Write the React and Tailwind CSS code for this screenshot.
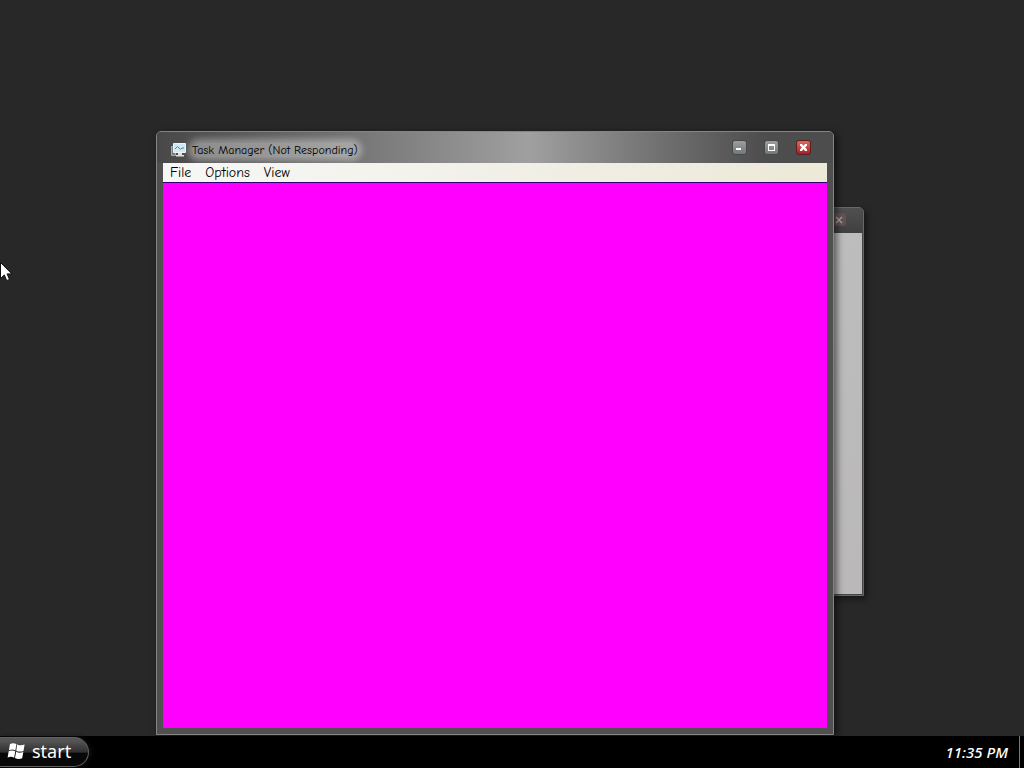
import React from 'react';

const WindowButton = ({ label, close = false, children }) => (
  <button
    type="button"
    aria-label={label}
    className={`flex h-[15px] w-[15px] items-center justify-center rounded-[3px] border ${
      close
        ? 'border-[#601c20] bg-linear-to-b from-[#d86c62] to-[#a81c24]'
        : 'border-[#454949] bg-linear-to-b from-[#9a9e9e] to-[#737878]'
    }`}
  >
    <svg viewBox="0 0 13 13" className="h-[13px] w-[13px] shrink-0" fill="none" aria-hidden="true">
      {children}
    </svg>
  </button>
);

const CloseGlyph = () => (
  <path
    d="M3 3h2l1.500 2L8 3h2v1.500L8.200 6.500 10 8.500V10H8L6.500 8 5 10H3V8.500l1.800-2L3 4.500z"
    fill="#fff"
  />
);

const MonitorIcon = () => (
  <svg viewBox="0 0 16 16" className="h-4 w-4 shrink-0" fill="none" aria-hidden="true">
    <path d="M.5 4.500h4v9h-4z" fill="#777d7d" stroke="#a9afaf" />
    <path d="M2.500 1.500h12v9h-12z" fill="#cfeaf2" stroke="#f1f3f1" />
    <path d="M4 7 6.500 4.500l3 3L11 6h2" stroke="#3a8aa8" />
    <path d="M7 11h4v2h2v1.500H5V13h2z" fill="#dfe2df" />
  </svg>
);

const BackgroundWindow = () => (
  <section
    aria-label="Background window"
    className="absolute top-[207px] left-[400px] flex h-[389px] w-[464px] flex-col rounded-t-[5px] border border-[#686868] bg-[#464646] px-px pb-px shadow-[3px_3px_6px_rgba(0,0,0,0.45)]"
  >
    <header className="flex h-[25px] shrink-0 items-start justify-end bg-linear-to-b from-[#505050] to-[#404040] pt-[5px] pr-4">
      <button
        type="button"
        aria-label="Close background window"
        className="flex h-[13px] w-[14px] items-center justify-center rounded-[3px] border border-[#744b4b] bg-[#625454]"
      >
        <svg viewBox="0 0 10 10" className="h-[10px] w-[10px] shrink-0" aria-hidden="true">
          <path d="m2 2 6 6m0-6-6 6" stroke="#aca2a2" strokeWidth="1.5" />
        </svg>
      </button>
    </header>
    <div className="grow bg-linear-to-b from-[#bdbdbd] to-[#bab8b8]" />
  </section>
);

const TaskManager = () => (
  <section
    aria-label="Task Manager"
    className="absolute top-[131px] left-[156px] flex h-[604px] w-[678px] flex-col rounded-t-[5px] border border-[#858585] bg-[#505050] px-[6px] pb-[6px] shadow-[3px_2px_7px_rgba(0,0,0,0.55)]"
  >
    <header className="-mx-[6px] flex h-[31px] shrink-0 items-center justify-between rounded-t-[4px] bg-linear-to-r from-[#484848] via-[#a0a0a0] via-55% to-[#4d4d4d] to-90% pr-[22px] pl-[14px]">
      <div className="flex items-center gap-[5px] pt-1">
        <MonitorIcon />
        <h1 className="rounded-full bg-white/35 font-['Comic_Sans_MS','Comic_Neue','Lato',cursive] text-[12px] leading-[14px] text-black shadow-[0_0_6px_4px_rgba(255,255,255,0.35)]">
          Task Manager (Not Responding)
        </h1>
      </div>
      <div className="flex gap-[17px]">
        <WindowButton label="Minimize">
          <path d="M3 7h5v2H3z" fill="#fff" />
        </WindowButton>
        <WindowButton label="Maximize">
          <path d="M3 3h7v7H3zm1 2v4h5V5z" fill="#fff" fillRule="evenodd" />
        </WindowButton>
        <WindowButton label="Close" close>
          <CloseGlyph />
        </WindowButton>
      </div>
    </header>
    <nav
      aria-label="Menu bar"
      className="flex h-5 shrink-0 items-center gap-[14px] border-b border-[#300070] bg-linear-to-r from-[#f7f7f7] to-[#ece9d8] pl-[7px] font-['Comic_Sans_MS','Comic_Neue','Lato',cursive] text-[14px] leading-[18px] text-black"
    >
      <button type="button">File</button>
      <button type="button">Options</button>
      <button type="button">View</button>
    </nav>
    <div className="grow bg-[#ff00ff]" />
  </section>
);

const Pointer = () => (
  <svg
    viewBox="0 0 12 20"
    className="absolute top-[262px] left-0 h-5 w-3"
    aria-hidden="true"
  >
    <path d="M.5.5v16l3.800-3.600 2.400 5.700 2.800-1.200-2.400-5.500h4.700z" fill="#fff" stroke="#111" />
  </svg>
);

const Taskbar = () => (
  <footer className="flex h-8 shrink-0 items-center justify-between bg-black">
    <button
      type="button"
      className="flex h-[30px] w-[89px] items-center gap-[6px] rounded-r-full border border-l-0 border-[#626262] bg-linear-to-b from-[#555] from-10% via-[#303030] via-50% to-[#080808] to-55% pb-[2px] pl-[7px] font-['Noto_Sans',sans-serif] text-[18px] leading-6 text-white shadow-[2px_0_4px_#111]"
    >
      <svg viewBox="0 0 19 18" className="h-[18px] w-[19px]" fill="#fff" aria-hidden="true">
        <path d="M3 2c2.300-1.200 4.500-1 6.400.1L8.400 8.300C6.500 7.300 4.400 7.200 1.900 8.300z" />
        <path d="M10.200 2.500c2.300 1.100 4.700 1.100 7.400.1l-1.100 6.300c-2.400 1-4.900.9-7.200-.2z" />
        <path d="M1.700 9.200c2.400-1.100 4.500-1 6.500.1l-1 6.400c-2-1.100-4.100-1.200-6.600-.1z" />
        <path d="M9.100 9.800c2.300 1.100 4.600 1.100 7.200.1l-1.100 6.400c-2.400 1-4.900.9-7.200-.2z" />
      </svg>
      start
    </button>
    <div className="flex h-full items-center">
      <time className="pr-[11px] font-['Noto_Sans',sans-serif] text-[15px] font-medium text-white italic">
        11:35 PM
      </time>
      <button
        type="button"
        aria-label="Show desktop"
        className="h-full w-[5px] border-l border-[#777] bg-black"
      />
    </div>
  </footer>
);

export default function App() {
  return (
    <div className="flex h-screen flex-col overflow-hidden bg-[#282828]">
      <main className="relative grow overflow-hidden">
        <BackgroundWindow />
        <TaskManager />
        <Pointer />
      </main>
      <Taskbar />
    </div>
  );
}
